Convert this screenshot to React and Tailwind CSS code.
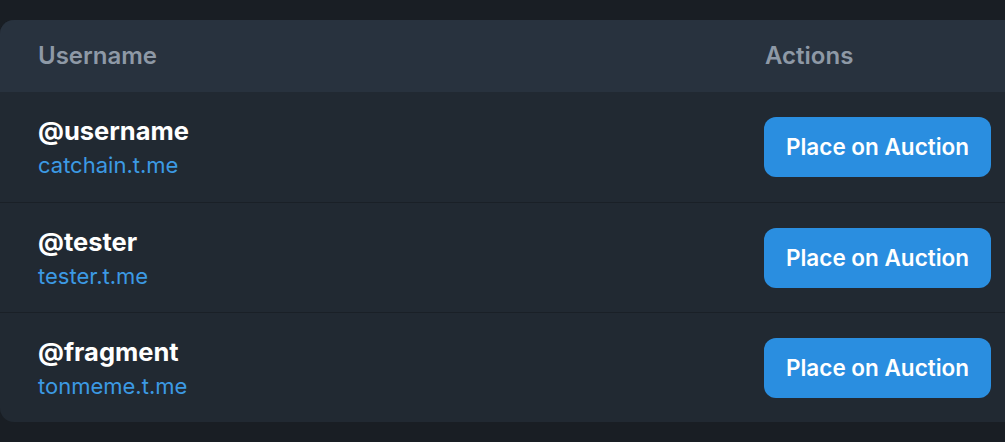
const rows = [
  { name: "@username", link: "catchain.t.me" },
  { name: "@tester", link: "tester.t.me" },
  { name: "@fragment", link: "tonmeme.t.me" },
];

export default function App() {
  return (
    <div className="h-[442px] w-[1005px] overflow-hidden bg-[#191e24] pt-[20px] font-['Inter',sans-serif]">
      <div className="w-[1030px] overflow-hidden rounded-[14px] bg-[#212932]">
        <div className="grid h-[72px] grid-cols-[764px_1fr] items-center bg-[#28323e] text-[24px] font-semibold text-[#8e99a6]">
          <div className="pl-[38px]">Username</div>
          <div className="pl-[1px]">Actions</div>
        </div>
        {rows.map((r, i) => (
          <div
            key={r.name}
            className={
              "grid h-[110px] grid-cols-[764px_1fr] items-center" +
              (i > 0 ? " border-t border-[#1a2027]" : "")
            }
          >
            <div className="pl-[38px]">
              <div className="text-[25.5px] font-bold leading-[32px] text-white">{r.name}</div>
              <div className="mt-[4px] text-[22px] leading-[28px] text-[#3c9ae4]">{r.link}</div>
            </div>
            <div>
              <button className="h-[60px] w-[227px] rounded-[12px] bg-[#2a8ee0] text-[22.5px] font-semibold text-white">
                Place on Auction
              </button>
            </div>
          </div>
        ))}
      </div>
    </div>
  );
}
